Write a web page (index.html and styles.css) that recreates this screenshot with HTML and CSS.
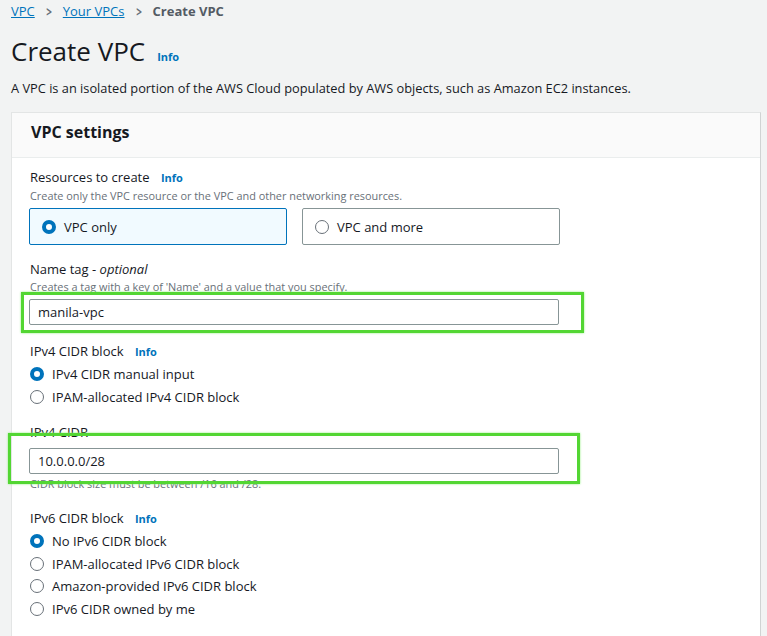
FILE: index.html
```html
<!DOCTYPE html>
<html lang="en">
<head>
  <meta charset="UTF-8">
  <title>Create VPC</title>
  <link rel="stylesheet" href="styles.css">
</head>
<body>
  <div class="breadcrumb">
    <a href="#">VPC</a>
    <span class="sep">&gt;</span>
    <a href="#">Your VPCs</a>
    <span class="sep">&gt;</span>
    <span class="current">Create VPC</span>
  </div>

  <div class="page-title">
    <h1>Create VPC</h1>
    <a class="info" href="#">Info</a>
  </div>
  <p class="page-desc">A VPC is an isolated portion of the AWS Cloud populated by AWS objects, such as Amazon EC2 instances.</p>

  <div class="card">
    <div class="card-header">VPC settings</div>
    <div class="card-body">

      <div class="field field-resources">
        <div class="label">Resources to create <a class="info" href="#">Info</a></div>
        <div class="hint">Create only the VPC resource or the VPC and other networking resources.</div>
        <div class="tiles">
          <div class="tile selected"><span class="radio checked"></span>VPC only</div>
          <div class="tile"><span class="radio"></span>VPC and more</div>
        </div>
      </div>

      <div class="field field-name">
        <div class="label">Name tag - <i>optional</i></div>
        <div class="hint">Creates a tag with a key of 'Name' and a value that you specify.</div>
        <div class="input-wrap">
          <input type="text" value="manila-vpc">
          <div class="highlight hl-name"></div>
        </div>
      </div>

      <div class="field">
        <div class="label">IPv4 CIDR block <a class="info" href="#">Info</a></div>
        <div class="options">
          <div class="option"><span class="radio checked"></span>IPv4 CIDR manual input</div>
          <div class="option"><span class="radio"></span>IPAM-allocated IPv4 CIDR block</div>
        </div>
      </div>

      <div class="field field-cidr">
        <div class="label">IPv4 CIDR</div>
        <div class="input-wrap">
          <input type="text" value="10.0.0.0/28">
          <div class="highlight hl-cidr"></div>
        </div>
        <div class="hint after">CIDR block size must be between /16 and /28.</div>
      </div>

      <div class="field">
        <div class="label">IPv6 CIDR block <a class="info" href="#">Info</a></div>
        <div class="options">
          <div class="option"><span class="radio checked"></span>No IPv6 CIDR block</div>
          <div class="option"><span class="radio"></span>IPAM-allocated IPv6 CIDR block</div>
          <div class="option"><span class="radio"></span>Amazon-provided IPv6 CIDR block</div>
          <div class="option"><span class="radio"></span>IPv6 CIDR owned by me</div>
        </div>
      </div>

    </div>
  </div>
</body>
</html>
```

FILE: styles.css
```css
body {
  margin: 0;
  padding: 0 0 0 11px;
  background-color: #f2f3f3;
  font-family: "Open Sans", "Noto Sans", Arial, sans-serif;
  font-size: 13px;
  color: #16191f;
  overflow: hidden;
}

a {
  color: #0073bb;
}

.breadcrumb {
  display: flex;
  align-items: center;
  gap: 10px;
  height: 22px;
  font-size: 13px;
}

.breadcrumb .sep {
  color: #687078;
  font-weight: bold;
  font-size: 14px;
  transform: scaleX(0.7);
}

.breadcrumb .current {
  color: #545b64;
  font-weight: bold;
}

.page-title {
  display: flex;
  align-items: baseline;
  gap: 12px;
  margin-top: 11px;
}

h1 {
  margin: 0;
  font-size: 26px;
  font-weight: normal;
  line-height: 36px;
}

.info {
  font-size: 11px;
  font-weight: bold;
  text-decoration: none;
}

.page-desc {
  margin: 9px 0 0;
  font-size: 12.8px;
  line-height: 20px;
}

.card {
  margin-top: 14px;
  width: 748px;
  height: 600px;
  background-color: #ffffff;
  border: 1px solid #e3e5e5;
  border-right-color: #d0d3d3;
}

.card-header {
  height: 44px;
  line-height: 38px;
  padding: 0 19px;
  font-size: 16px;
  font-weight: bold;
  background-color: #fafafa;
  border-bottom: 1px solid #eaeded;
}

.card-body {
  padding: 9px 0 0 17px;
}

.field {
  margin-bottom: 12px;
}

.field-resources {
  margin-bottom: 14px;
}

.field-name {
  margin-bottom: 16px;
}

.field-cidr {
  margin-top: 14px;
  margin-bottom: 16px;
}

.label {
  font-size: 13px;
  line-height: 20px;
  padding-left: 1px;
}

.label .info {
  margin-left: 8px;
}

.hint {
  font-size: 10.9px;
  line-height: 16px;
  color: #687078;
  padding-left: 1px;
}

.hint.after {
  margin-top: 2px;
}

.tiles {
  display: flex;
  gap: 15px;
  margin-top: 4px;
}

.tile {
  display: flex;
  align-items: center;
  box-sizing: border-box;
  width: 258px;
  height: 37px;
  padding-left: 12px;
  border: 1px solid #879596;
  border-radius: 2px;
}

.tile.selected {
  background-color: #f1faff;
  border-color: #0073bb;
}

.radio {
  display: inline-block;
  box-sizing: border-box;
  width: 14px;
  height: 14px;
  margin-right: 8px;
  border: 1px solid #687078;
  border-radius: 50%;
  background-color: #ffffff;
}

.radio.checked {
  border: 4px solid #0073bb;
}

.input-wrap {
  position: relative;
  width: 530px;
  margin-top: 4px;
}

.field-cidr .input-wrap {
  margin-top: 6px;
}

input {
  display: block;
  box-sizing: border-box;
  width: 530px;
  height: 26px;
  padding: 0 8px;
  border: 1px solid #879596;
  border-radius: 2px;
  font-family: inherit;
  font-size: 13px;
  color: #16191f;
}

.highlight {
  position: absolute;
  border: 3px solid #53d633;
  box-shadow: 0 0 2px #8ef07a;
  pointer-events: none;
}

.hl-name {
  left: -8px;
  top: -7px;
  width: 557px;
  height: 35px;
}

.hl-cidr {
  left: -21px;
  top: -15px;
  width: 566px;
  height: 45px;
}

.options {
  margin-top: 1px;
}

.option {
  display: flex;
  align-items: center;
  height: 22.5px;
  padding-left: 1px;
}
```
